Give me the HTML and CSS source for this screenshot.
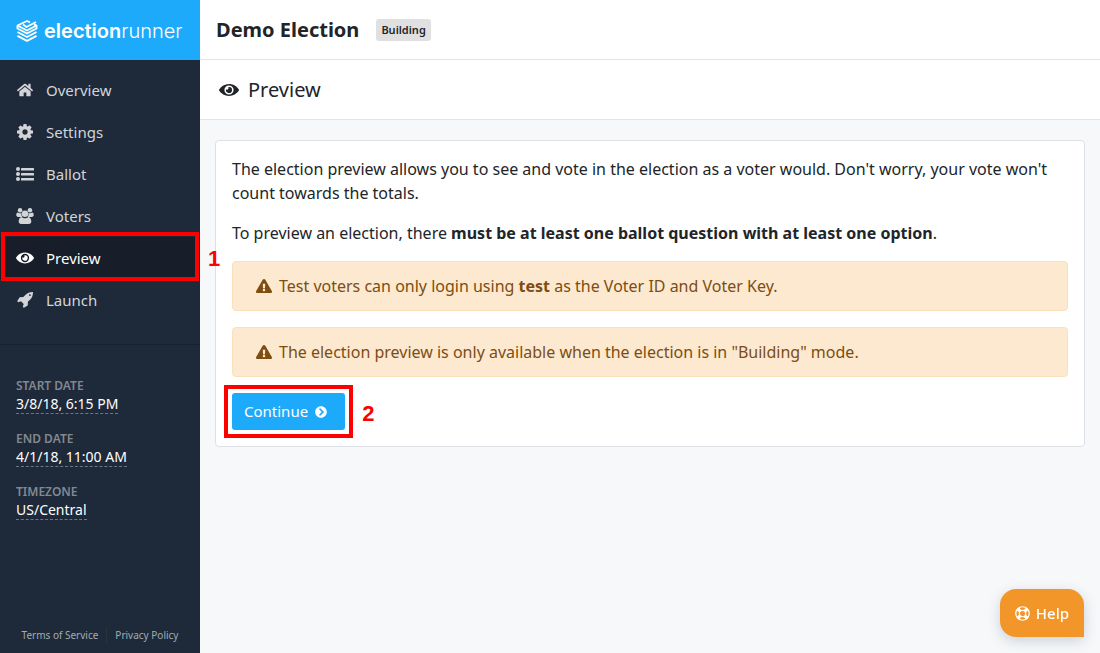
FILE: index.html
```html
<!DOCTYPE html>
<html lang="en">
<head>
    <meta charset="UTF-8">
    <meta name="viewport" content="width=device-width, initial-scale=1.0">
    <title>Preview - Election Runner</title>
    <link rel="stylesheet" href="styles.css">
</head>
<body>
    <!-- Shared icons -->
    <svg class="sprite" aria-hidden="true">
        <symbol id="icon-eye" viewBox="0 0 20 12">
            <path fill-rule="evenodd" d="M10 0c4.200 0 7.800 2.200 9.800 5.400.3.400.3.800 0 1.200C17.800 9.800 14.200 12 10 12S2.200 9.800.200 6.600c-.3-.4-.3-.8 0-1.200C2.200 2.200 5.800 0 10 0zM10 1.400a4.600 4.600 0 1 0 0 9.200 4.600 4.600 0 0 0 0-9.200z"/>
            <path d="M10 3a3 3 0 1 1-2.900 2.300 1.500 1.500 0 0 0 2.100-2.100A3 3 0 0 1 10 3z"/>
        </symbol>
        <symbol id="icon-warning" viewBox="0 0 576 512"><path d="M569.517 440.013C587.975 472.007 564.806 512 527.94 512H48.054c-36.937 0-59.999-40.055-41.577-71.987L246.423 23.985c18.467-32.009 64.72-31.951 83.154 0l239.94 416.028zM288 354c-25.405 0-46 20.595-46 46s20.595 46 46 46 46-20.595 46-46-20.595-46-46-46zm-43.673-165.346l7.418 136c.347 6.364 5.609 11.346 11.982 11.346h48.546c6.373 0 11.635-4.982 11.982-11.346l7.418-136c.375-6.874-5.098-12.654-11.982-12.654h-63.383c-6.884 0-12.356 5.78-11.981 12.654z"/></symbol>
    </svg>

    <div class="app">
        <aside class="sidebar">
            <a class="brand" href="#">
                <svg class="brand-mark" viewBox="0 0 22 22" aria-hidden="true">
                    <path d="M14 2.300 L11 1 L1.500 5.500 L11 10.500 L20.500 5.500 L18 4.300 M1.500 5.500 V8.500 L11 13.500 L20.500 8.500 V5.500 M1.500 12 L11 17 L20.500 12 M1.500 15.800 L11 20.800 L20.500 15.800"/>
                    <path d="M7 4.500 L10.500 7 L20 2"/>
                </svg>
                <span class="brand-name"><b>election</b>runner</span>
            </a>

            <nav class="menu">
                <a class="menu-item" href="#">
                    <svg class="icon" viewBox="-32 0 640 512" aria-hidden="true"><path d="M488 312.7V456c0 13.3-10.7 24-24 24H348c-6.6 0-12-5.4-12-12V356c0-6.6-5.4-12-12-12h-72c-6.6 0-12 5.4-12 12v112c0 6.6-5.4 12-12 12H112c-13.3 0-24-10.7-24-24V312.7c0-3.6 1.6-7 4.4-9.3l188-154.8c4.4-3.6 10.8-3.6 15.3 0l188 154.8c2.7 2.3 4.3 5.7 4.3 9.3zm83.6-60.9L488 182.900V44.400c0-6.600-5.400-12-12-12h-56c-6.600 0-12 5.400-12 12V117l-89.500-73.700c-17.700-14.600-43.300-14.600-61 0L4.400 251.800c-5.100 4.200-5.800 11.800-1.600 16.900l25.500 31c4.200 5.100 11.800 5.800 16.900 1.600l235.200-193.700c4.400-3.600 10.800-3.600 15.300 0l235.200 193.700c5.100 4.200 12.700 3.500 16.900-1.600l25.500-31c4.200-5.200 3.400-12.700-1.700-16.900z"/></svg>
                    Overview
                </a>
                <a class="menu-item" href="#">
                    <svg class="icon" viewBox="128 128 1536 1536" aria-hidden="true"><path d="M1152 896q0-106-75-181t-181-75-181 75-75 181 75 181 181 75 181-75 75-181zm512-109v222q0 12-8 23t-20 13l-185 28q-19 54-39 91 35 50 107 138 10 12 10 25t-9 23q-27 37-99 108t-94 71q-12 0-26-9l-138-108q-44 23-91 38-16 136-29 186-7 28-36 28h-222q-14 0-24.5-8.5t-11.5-21.5l-28-184q-49-16-90-37l-141 107q-10 9-25 9-14 0-25-11-126-114-165-168-7-10-7-23 0-12 8-23 15-21 51-66.5t54-70.5q-27-50-41-99l-183-27q-13-2-21-12.5t-8-23.5v-222q0-12 8-23t19-13l186-28q14-46 39-92-40-57-107-138-10-12-10-24 0-10 9-23 26-36 98.5-107.5t94.5-71.5q13 0 26 10l138 107q44-23 91-38 16-136 29-186 7-28 36-28h222q14 0 24.5 8.5t11.5 21.5l28 184q49 16 90 37l142-107q9-9 24-9 13 0 25 10 129 119 165 170 7 8 7 22 0 12-8 23-15 21-51 66.5t-54 70.5q26 50 41 98l183 28q13 2 21 12.5t8 23.5z"/></svg>
                    Settings
                </a>
                <a class="menu-item" href="#">
                    <svg class="icon" viewBox="0 0 18 16" aria-hidden="true">
                        <circle cx="2" cy="3" r="2"/><circle cx="2" cy="8" r="2"/><circle cx="2" cy="13" r="2"/>
                        <rect x="5" y="2" width="13" height="2.500" rx=".5"/><rect x="5" y="7" width="13" height="2.500" rx=".5"/><rect x="5" y="12" width="13" height="2.500" rx=".5"/>
                    </svg>
                    Ballot
                </a>
                <a class="menu-item" href="#">
                    <svg class="icon icon-users" viewBox="0 0 20 18" aria-hidden="true">
                        <circle cx="4.500" cy="2.500" r="2.500"/><circle cx="15.500" cy="2.500" r="2.500"/>
                        <path d="M2 5.200c1.500 1 3.200 1 4.300.5C5.800 7.500 6.200 9 7 10H2.500C1 10 .3 9.200.3 8c0-1.300.5-2.800 1.700-2.800zM18 5.200c-1.500 1-3.200 1-4.300.5.500 1.800.1 3.300-.7 4.300h4.500c1.500 0 2.200-.8 2.200-2 0-1.300-.5-2.800-1.700-2.800z"/>
                        <circle cx="10" cy="6.500" r="3.600"/>
                        <path d="M6.300 10.200c2.200 1.800 5.200 1.800 7.400 0 2.300.2 3.300 2.600 3.300 5 0 1.800-1 2.800-2.700 2.800H5.700C4 18 3 17 3 15.200c0-2.400 1-4.800 3.300-5z"/>
                    </svg>
                    Voters
                </a>
                <a class="menu-item active" href="#" aria-current="page">
                    <svg class="icon" aria-hidden="true"><use href="#icon-eye"/></svg>
                    Preview
                    <span class="callout callout-menu"><span class="callout-number">1</span></span>
                </a>
                <a class="menu-item" href="#">
                    <svg class="icon" viewBox="0 128 1664 1664" aria-hidden="true"><path d="M1440 448q0-40-28-68t-68-28-68 28-28 68 28 68 68 28 68-28 28-68zm224-288q0 249-75.5 430.5t-253.5 360.5q-81 80-195 176l-20 379q-2 16-16 26l-384 224q-7 4-16 4-12 0-23-9l-64-64q-13-14-8-32l85-276-281-281-276 85q-3 1-9 1-14 0-23-9l-64-64q-17-19-5-39l224-384q10-14 26-16l379-20q96-114 176-195 188-187 358-258t431-71q14 0 24 9.500t10 22.500z"/></svg>
                    Launch
                </a>
            </nav>

            <dl class="details">
                <dt>Start Date</dt>
                <dd><span>3/8/18, 6:15 PM</span></dd>
                <dt>End Date</dt>
                <dd><span>4/1/18, 11:00 AM</span></dd>
                <dt>Timezone</dt>
                <dd><span>US/Central</span></dd>
            </dl>

            <footer class="legal">
                <a href="#">Terms of Service</a>
                <a href="#">Privacy Policy</a>
            </footer>
        </aside>

        <main class="main">
            <header class="bar">
                <h1>Demo Election</h1>
                <span class="badge">Building</span>
            </header>
            <div class="bar bar-page">
                <svg class="bar-icon" aria-hidden="true"><use href="#icon-eye"/></svg>
                <h2>Preview</h2>
            </div>

            <section class="card">
                <p>The election preview allows you to see and vote in the election as a voter would. Don't worry, your vote won't count towards the totals.</p>
                <p>To preview an election, there <strong>must be at least one ballot question with at least one option</strong>.</p>
                <div class="alert">
                    <svg class="alert-icon" aria-hidden="true"><use href="#icon-warning"/></svg>
                    <span>Test voters can only login using <strong>test</strong> as the Voter ID and Voter Key.</span>
                </div>
                <div class="alert">
                    <svg class="alert-icon" aria-hidden="true"><use href="#icon-warning"/></svg>
                    <span>The election preview is only available when the election is in "Building" mode.</span>
                </div>
                <div class="actions">
                    <button class="button" type="button">
                        Continue
                        <svg class="button-icon" viewBox="0 0 512 512" aria-hidden="true"><path d="M256 8c137 0 248 111 248 248S393 504 256 504 8 393 8 256 119 8 256 8zm113.900 231L234.400 103.500c-9.400-9.400-24.600-9.400-33.900 0l-17 17c-9.400 9.400-9.400 24.600 0 33.900L285.100 256 183.500 357.600c-9.400 9.400-9.400 24.600 0 33.900l17 17c9.400 9.400 24.600 9.400 33.900 0L369.900 273c9.400-9.400 9.400-24.600 0-34z"/></svg>
                    </button>
                    <span class="callout callout-button"><span class="callout-number">2</span></span>
                </div>
            </section>
        </main>
    </div>

    <button class="help" type="button">
        <svg class="help-icon" viewBox="0 0 16 16" aria-hidden="true">
            <circle cx="8" cy="8" r="7.200" stroke-width="1.300"/>
            <circle cx="8" cy="8" r="3.400" stroke-width="1.200"/>
            <path d="M2.800 2.800 L5.600 5.600 M13.200 2.800 L10.400 5.600 M2.800 13.200 L5.600 10.400 M13.200 13.200 L10.400 10.400" stroke-width="3.600"/>
        </svg>
        Help
    </button>
</body>
</html>
```
FILE: styles.css
```css
* {
    box-sizing: border-box;
}
body {
    margin: 0;
    font-family: "Noto Sans", sans-serif;
    font-size: 16px;
    line-height: 24px;
    color: #212529;
    background-color: #f7f8fa;
}
a {
    color: inherit;
    text-decoration: none;
}
.sprite {
    display: none;
}
.app {
    display: flex;
    min-height: 100vh;
}

/* Sidebar */
.sidebar {
    display: flex;
    flex-direction: column;
    flex: 0 0 200px;
    background-color: #1e2a3a;
}
.brand {
    display: flex;
    align-items: center;
    gap: 6px;
    height: 60px;
    padding: 2px 16px 0;
    color: white;
    background-color: #1eaafa;
}
.brand-mark {
    width: 22px;
    height: 22px;
    fill: none;
    stroke: white;
    stroke-width: 1.9;
    stroke-linejoin: round;
}
.brand-name {
    font-family: Inter, sans-serif;
    font-size: 20px;
    font-weight: 300;
}
.brand-name b {
    font-weight: 600;
}
.menu {
    padding: 9px 0 23px;
    border-bottom: 1px solid #192330;
}
.menu-item {
    position: relative;
    display: flex;
    align-items: center;
    gap: 12px;
    height: 42px;
    padding: 0 16px;
    font-size: 15px;
    color: #d2d4d8;
}
.menu-item.active {
    color: white;
    background-color: #171e29;
}
.icon {
    width: 18px;
    height: 16px;
    fill: currentColor;
}
.icon-users {
    height: 18px;
}
.details {
    margin: 0;
    padding: 32px 16px;
}
.details dt {
    font-size: 12px;
    font-weight: 600;
    line-height: 18px;
    text-transform: uppercase;
    color: #82888f;
}
.details dd {
    margin: 0 0 16px;
    font-size: 14px;
    line-height: 18px;
    color: white;
}
.details dd span {
    display: inline-block;
    border-bottom: 1px dashed #6e7781;
}
.legal {
    display: flex;
    justify-content: center;
    margin-top: auto;
    padding-bottom: 10px;
    font-size: 10px;
    line-height: 16px;
    color: #a4aab1;
}
.legal a {
    padding: 0 8px;
}
.legal a + a {
    border-left: 1px solid #2b333d;
}

/* Content */
.main {
    flex: 1;
    min-width: 0;
}
.bar {
    display: flex;
    align-items: center;
    gap: 17px;
    height: 60px;
    padding: 0 16px;
    background-color: white;
    border-bottom: 1px solid #e3e4e6;
}
.bar-page {
    gap: 9px;
    padding: 0 19px;
}
.bar h1,
.bar h2 {
    margin: 0;
    font-size: 20px;
    font-weight: 700;
}
.bar h2 {
    font-weight: 400;
}
.bar-icon {
    width: 20px;
    height: 12px;
    fill: currentColor;
}
.badge {
    padding: 3px 5px;
    font-size: 11px;
    font-weight: 600;
    line-height: 16px;
    background-color: #e0e0e0;
    border-radius: 3px;
}
.card {
    margin: 20px 15px;
    padding: 16px;
    background-color: white;
    border: 1px solid #dde1e6;
    border-radius: 4px;
}
.card p {
    margin: 0 0 16px;
}
.alert {
    display: flex;
    align-items: center;
    gap: 7px;
    margin-bottom: 16px;
    padding: 12px 23px;
    color: #7d4d12;
    background-color: #fce9cf;
    border: 1px solid #fbe0bb;
    border-radius: 4px;
}
.alert-icon {
    flex: none;
    width: 16px;
    height: 16px;
    fill: currentColor;
}
.actions {
    position: relative;
    display: flex;
    width: max-content;
}
.button {
    display: flex;
    align-items: center;
    gap: 7px;
    padding: 8px 18px 8px 12px;
    font-family: inherit;
    font-size: 15px;
    line-height: 21px;
    color: white;
    background-color: #1eaafa;
    border: none;
    border-radius: 3px;
    cursor: pointer;
}
.button-icon {
    width: 12px;
    height: 12px;
    fill: currentColor;
}
.help {
    position: fixed;
    right: 16px;
    bottom: 16px;
    display: flex;
    align-items: center;
    gap: 6px;
    height: 48px;
    padding: 0 15px;
    font-family: inherit;
    font-size: 15px;
    font-weight: 500;
    color: white;
    background-color: #f39629;
    border: none;
    border-radius: 16px 16px 0 16px;
    box-shadow: 0 4px 14px rgba(30, 60, 90, 0.2);
    cursor: pointer;
}
.help-icon {
    width: 15px;
    height: 15px;
    fill: none;
    stroke: currentColor;
}

/* Numbered step markers */
.callout {
    position: absolute;
    border: 4px solid #fe0000;
    pointer-events: none;
}
.callout-menu {
    inset: -5px 1px -2px;
}
.callout-button {
    inset: -8px;
}
.callout-number {
    position: absolute;
    top: 50%;
    left: 100%;
    margin-left: 13px;
    padding-top: 3px;
    font-family: "Liberation Sans", sans-serif;
    font-size: 22px;
    font-weight: 700;
    color: #fe0000;
    transform: translateY(-50%);
}
```
